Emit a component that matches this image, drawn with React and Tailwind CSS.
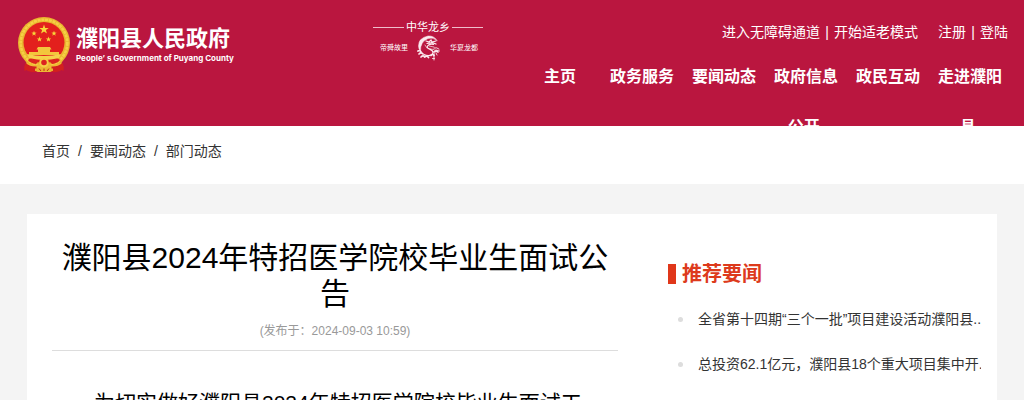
import React from "react";

const navItems = ["主页", "政务服务", "要闻动态", "政府信息公开\u00a0", "政民互动", "走进濮阳县\u00a0"];
const crumbs = ["首页", "要闻动态", "部门动态"];
const news = [
  "全省第十四期“三个一批”项目建设活动濮阳县...",
  "总投资62.1亿元，濮阳县18个重大项目集中开...",
];

const STAR = "0,-1 0.235,-0.324 0.951,-0.309 0.38,0.124 0.588,0.809 0,0.4 -0.588,0.809 -0.38,0.124 -0.951,-0.309 -0.235,-0.324";

function Star({ x, y, r }) {
  return <polygon points={STAR} fill="#f7d83a" transform={`translate(${x} ${y}) scale(${r})`} />;
}

function Emblem() {
  return (
    <svg viewBox="0 0 52 57" className="h-[57px] w-[52px] shrink-0" aria-hidden="true">
      <circle cx="26" cy="26" r="26" fill="#e9b52f" />
      <circle cx="26" cy="26" r="23.3" fill="none" stroke="#f6cf45" strokeWidth="2.6" strokeDasharray="3 0.8" />
      <circle cx="26" cy="25.500" r="20.5" fill="#e3201d" />
      <Star x={26} y={12.5} r={5} />
      <Star x={16} y={16.5} r={2.8} />
      <Star x={36} y={16.5} r={2.8} />
      <Star x={21.5} y={22.3} r={2.8} />
      <Star x={30.5} y={22.3} r={2.8} />
      <path d="M20 30h12l1.500 2.500h-1.500v2.500h9V38H11v-3h9v-2.500h-1.500z" fill="#f3c63c" />
      <path d="M9 37q17 4 34 0l-2 4q-15 4-30 0z" fill="#f5d24b" />
      <path d="M8 45q8 4 12 2.500l6-5 6 5q4 1.500 12-2.500l-2 8-10 2H20l-10-2z" fill="#edb935" />
      <path d="M12 41.500q7 2 10 1.500l-4 4q-6-1-8-4zM40 41.500q-7 2-10 1.500l4 4q6-1 8-4z" fill="#dc2420" />
      <circle cx="26" cy="45.500" r="3.800" fill="#dc2420" stroke="#f6cf45" strokeWidth="2" />
      <path d="M7.500 46q5 4 11 3.500V55q-7 .5-10-2l-2 1q-1-4 1-8zM44.500 46q-5 4-11 3.500V55q7 .5 10-2l2 1q1-4-1-8z" fill="#d3201f" />
      <path d="M17 51.500h18V54H17z" fill="#e9b42e" />
      <path d="M21 51.500l2 2.500M26 51.500V54M31 51.500l-2 2.500" stroke="#c9251d" strokeWidth="1" />
    </svg>
  );
}

function Dragon() {
  return (
    <svg viewBox="0 0 24 26" className="h-[26px] w-6" fill="none" stroke="#fbe9ee" strokeLinecap="round" aria-hidden="true">
      <path d="M20 5.500Q17 0.500 11 1 1.500 3 1.500 11q0 3 2 5Q3 7 11 3.500q5-1.500 9 2z" fill="#fbe9ee" strokeWidth=".5" />
      <path d="M9 6l3 1 2-2 1 2 4-1M10 8.500q5-1.500 9 .5M16.500 9.500q-4-1-6 1.500c-2 3 6 3 5.500 6.500-.5 3-5 4-9 2" strokeWidth="1.200" />
      <path d="M8 10l2 3M12 11l5 1M13 14l4 .5" strokeWidth=".7" />
      <path d="M1 16q2-1 3 1M2 19q2-2 4 0M4 22q2-2 4 0M7.500 22q2-2 4 .5M14 20.500q2-2 3 0M17 17q2-2 4 0" strokeWidth="1.700" />
      <path d="M17 13q3-1 5 1M19 15l3.500 1M17 18v7M15.500 23.500h2M19 18l1 2" strokeWidth=".9" />
    </svg>
  );
}

function Header() {
  return (
    <header className="flex h-[126px] items-start overflow-hidden bg-[#ba163f] text-white">
      <a href="#home" className="flex items-start gap-[6px] pl-[18px] pt-[17px]">
        <Emblem />
        <span className="block pt-[10px] whitespace-nowrap">
          <span className="block text-[22px] leading-[24px] font-bold">濮阳县人民政府</span>
          <span className="block font-['Inter','Noto_Sans_CJK_SC',sans-serif] text-[8px] leading-[14px] font-bold">
            People’ s Government of Puyang County
          </span>
        </span>
      </a>
      <div className="mr-9 ml-auto flex w-[110px] shrink-0 flex-col pt-[20px] font-['Liberation_Serif','Noto_Sans_CJK_SC',serif] whitespace-nowrap">
        <div className="flex items-center justify-between">
          <span className="h-px w-[31px] bg-[#f0bccb]" />
          <span className="text-[11px] leading-[15px]">中华龙乡</span>
          <span className="h-px w-[31px] bg-[#f0bccb]" />
        </div>
        <div className="flex items-center justify-between pr-[5px] pl-[7px]">
          <span className="text-[7px]">帝舜故里</span>
          <Dragon />
          <span className="text-[7px]">华夏龙都</span>
        </div>
      </div>
      <div className="shrink-0 pt-[22px]">
        <div className="flex justify-end gap-5 pr-4 leading-5">
          <div className="flex">
            <a href="#accessible">进入无障碍通道</a>
            <span className="w-[14px] text-center">|</span>
            <a href="#senior">开始适老模式</a>
          </div>
          <div className="flex">
            <a href="#register">注册</a>
            <span className="w-[14px] text-center">|</span>
            <a href="#login">登陆</a>
          </div>
        </div>
        <nav className="mt-[10px] pr-[13px]">
          <ul className="flex">
            {navItems.map((item) => (
              <li key={item} className="w-[82px] px-[5px] text-center text-base leading-[50px] font-bold">
                <a href="#nav">{item}</a>
              </li>
            ))}
          </ul>
        </nav>
      </div>
    </header>
  );
}

export default function App() {
  return (
    <div className="min-h-screen bg-[#f4f4f4] font-['Liberation_Sans','Noto_Sans_CJK_SC',sans-serif] text-[14px] text-[#333]" lang="zh-CN">
      <Header />
      <nav className="flex gap-2 bg-white px-[42px] pt-[15px] pb-[23px] leading-5" aria-label="当前位置">
        {crumbs.map((crumb, i) => (
          <React.Fragment key={crumb}>
            {i > 0 && <span>/</span>}
            <a href="#crumb">{crumb}</a>
          </React.Fragment>
        ))}
      </nav>
      <main className="mx-[27px] mt-[30px] flex bg-white pr-4 pl-[25px]">
        <article className="min-w-0 flex-1 pt-[26px] text-black">
          <h1 className="text-center text-[30px] leading-[36px]">濮阳县2024年特招医学院校毕业生面试公告</h1>
          <p className="border-b border-[#ddd] pt-[9px] pb-[9px] text-center text-xs leading-[20px] text-[#999]">
            (发布于：2024-09-03 10:59)
          </p>
          <p className="pt-[36px] indent-[2em] text-[21px] leading-[32px]">
            为切实做好濮阳县2024年特招医学院校毕业生面试工
          </p>
        </article>
        <aside className="ml-[50px] w-[313px] shrink-0 pt-[50px]">
          <h2 className="flex items-center gap-[6px] text-[20px] leading-5 font-bold text-[#dd3a1c]">
            <span className="h-5 w-2 bg-[#e0371a]" />
            推荐要闻
          </h2>
          <ul className="pt-[13px]">
            {news.map((title) => (
              <li key={title} className="flex items-center pl-[10px] leading-[45px]">
                <span className="mr-[15px] size-[5px] shrink-0 rounded-full bg-[#ddd]" />
                <a href="#news" className="min-w-0 overflow-hidden whitespace-nowrap">{title}</a>
              </li>
            ))}
          </ul>
        </aside>
      </main>
    </div>
  );
}
